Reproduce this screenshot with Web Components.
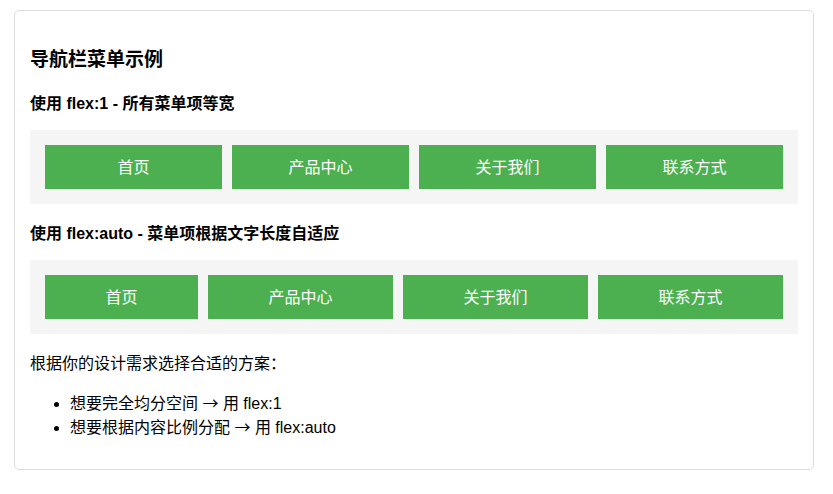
<!DOCTYPE html>
<html lang="zh-CN">
<head>
<meta charset="utf-8">
<title>导航栏菜单示例</title>
<style>
body { margin: 0; padding: 10px 19px 24px 14px; background: #fff; color: #000; font: 16px/24px "Liberation Sans", "Noto Sans CJK SC", sans-serif; }
</style>
</head>
<body>
<demo-page></demo-page>
<script>
class DemoCard extends HTMLElement {
  constructor() {
    super();
    this.attachShadow({ mode: "open" }).innerHTML = `
      <style>
        :host { display: block; border: 1px solid #ddd; border-radius: 5px; padding: 35px 15px 29px; }
        h3 { margin: 0 0 18px; font-size: 19px; line-height: 28px; font-weight: 700; }
      </style>
      <h3><slot name="title"></slot></h3>
      <slot></slot>`;
  }
}
customElements.define("demo-card", DemoCard);

class MenuItem extends HTMLElement {
  constructor() {
    super();
    this.attachShadow({ mode: "open" }).innerHTML = `
      <style>
        :host { display: block; }
        a { display: block; padding: 11px 10px 9px; background: #4caf50; color: #fff; text-align: center; text-decoration: none; }
      </style>
      <a href="#"><slot></slot></a>`;
  }
}
customElements.define("menu-item", MenuItem);

class MenuBar extends HTMLElement {
  constructor() {
    super();
    this.attachShadow({ mode: "open" }).innerHTML = `
      <style>
        :host { display: block; }
        h4 { margin: 0 0 14px; font-size: 16px; line-height: 24px; font-weight: 700; }
        nav { display: flex; gap: 10px; padding: 15px; background: #f5f5f5; }
        ::slotted(menu-item) { flex: 1; }
        :host([fit="auto"]) ::slotted(menu-item) { flex: auto; }
      </style>
      <h4><slot name="label"></slot></h4>
      <nav><slot></slot></nav>`;
  }
}
customElements.define("menu-bar", MenuBar);

class DemoPage extends HTMLElement {
  constructor() {
    super();
    this.attachShadow({ mode: "open" }).innerHTML = `
      <style>
        :host { display: block; }
        menu-bar { margin-bottom: 18px; }
        p { margin: 0 0 16px; }
        ul { margin: 0; padding-left: 40px; }
        .arrow { font-family: "Noto Sans CJK SC", sans-serif; line-height: 1; }
      </style>
      <demo-card>
        <span slot="title">导航栏菜单示例</span>
        <menu-bar>
          <span slot="label">使用 flex:1 - 所有菜单项等宽</span>
          <menu-item>首页</menu-item><menu-item>产品中心</menu-item><menu-item>关于我们</menu-item><menu-item>联系方式</menu-item>
        </menu-bar>
        <menu-bar fit="auto">
          <span slot="label">使用 flex:auto - 菜单项根据文字长度自适应</span>
          <menu-item>首页</menu-item><menu-item>产品中心</menu-item><menu-item>关于我们</menu-item><menu-item>联系方式</menu-item>
        </menu-bar>
        <p>根据你的设计需求选择合适的方案：</p>
        <ul>
          <li>想要完全均分空间 <span class="arrow">→</span> 用 flex:1</li>
          <li>想要根据内容比例分配 <span class="arrow">→</span> 用 flex:auto</li>
        </ul>
      </demo-card>`;
  }
}
customElements.define("demo-page", DemoPage);
</script>
</body>
</html>
